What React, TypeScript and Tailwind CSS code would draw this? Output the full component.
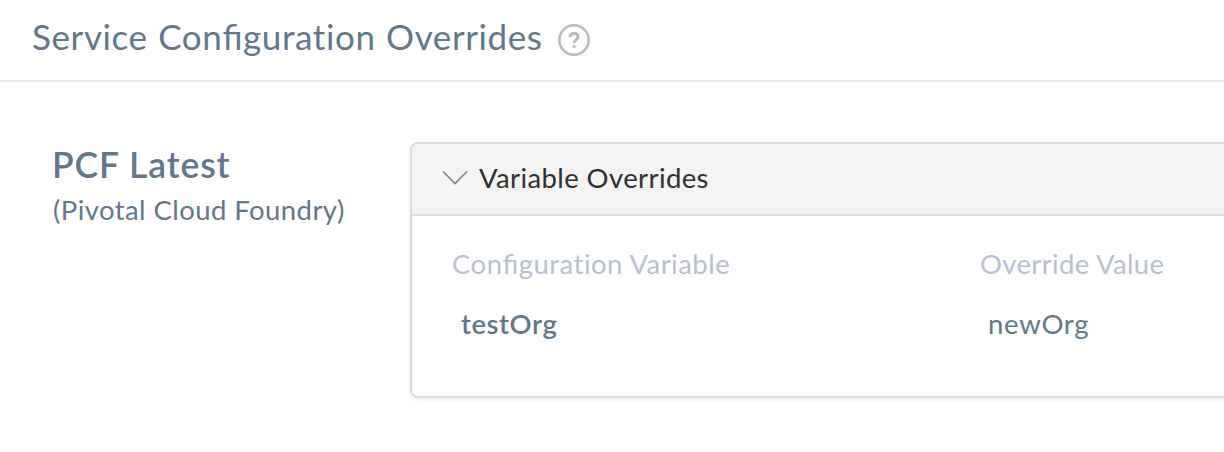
function HelpIcon() {
  return (
    <svg className="mt-1.5 h-8 w-8 text-[#b9b9b9]" viewBox="0 0 32 32" fill="none" stroke="currentColor">
      <circle cx="16" cy="16" r="14.7" strokeWidth="2.5" />
      <path d="M11.9 13C12.1 10.8 13.7 9.5 16 9.5c2.4 0 4 1.3 4 3.3 0 2.8-3.9 2.9-3.9 6.4" strokeWidth="2.8" />
      <path d="M16.1 21.1v2.8" strokeWidth="3" />
    </svg>
  );
}

function ChevronDown() {
  return (
    <svg className="mb-[3px] h-4 w-[26px] text-[#808080]" viewBox="0 0 26 16" fill="none" stroke="currentColor">
      <path d="M1 1.5 13 13.5 25 1.5" strokeWidth="1.6" />
    </svg>
  );
}

function Configuration() {
  return (
    <>
      Con<span className="[font-feature-settings:'liga'_1]">fi</span>guration
    </>
  );
}

export default function App() {
  return (
    <div className="h-[452px] w-[1224px] overflow-hidden bg-white font-['Lato',sans-serif] text-[#63778b]">
      <header className="flex h-[82px] items-start border-b-2 border-[#e4e8ec] pl-8 pt-[18px]">
        <h1 className="w-[526px] whitespace-nowrap text-[35px] leading-9 tracking-[0.6px] [word-spacing:1px]">
          Service <Configuration /> Overrides
        </h1>
        <HelpIcon />
      </header>
      <main className="flex pt-[60px]">
        <section className="w-[410px] shrink-0 whitespace-nowrap pl-[52px] pt-[5px]">
          <h2 className="text-[35.5px] font-semibold leading-9 tracking-[0.9px]">PCF Latest</h2>
          <p className="mt-[9px] pl-px text-[27.5px] leading-9 tracking-[0.43px]">(Pivotal Cloud Foundry)</p>
        </section>
        <section className="h-64 w-[840px] shrink-0 overflow-hidden whitespace-nowrap rounded-lg border-2 border-[#dcdcdc] text-[27.5px] leading-9 shadow-[0_2px_4px_rgba(0,0,0,0.06)]">
          <div className="flex h-[72px] items-center border-b-2 border-[#dcdcdc] bg-[#f4f4f4] pl-[30px] text-[#303030]">
            <ChevronDown />
            <span className="mb-0.5 ml-[11px] tracking-[0.4px]">Variable Overrides</span>
          </div>
          <div className="grid grid-cols-[528px_1fr] pl-10 pt-[30px]">
            <span className="tracking-[0.48px] text-[#b8c0cf]">
              <Configuration /> Variable
            </span>
            <span className="tracking-[0.35px] text-[#b8c0cf]">Override Value</span>
            <span className="mt-6 pl-[9px] font-semibold tracking-[0.5px]">testOrg</span>
            <span className="mt-6 pl-2 tracking-[0.7px]">newOrg</span>
          </div>
        </section>
      </main>
    </div>
  );
}
